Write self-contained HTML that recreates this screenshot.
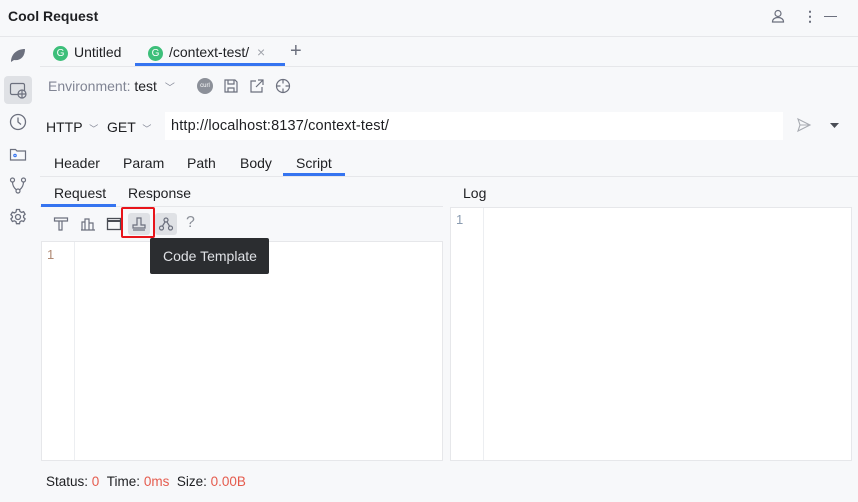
<!DOCTYPE html>
<html><head><meta charset="utf-8"><style>
body{margin:0;width:858px;height:502px;background:#f7f8fa;font-family:"Liberation Sans",sans-serif;font-size:14px;color:#1e1f22;position:relative;overflow:hidden}
.a{position:absolute;white-space:nowrap}
.line{position:absolute;background:#e6e7ea;height:1px}
svg{position:absolute}
.g{display:inline-block;width:15px;height:15px;border-radius:50%;background:#3dbf7a;color:#fff;font-size:10px;text-align:center;line-height:15px;vertical-align:1px;margin-right:6px}
</style></head><body>
<div class="a" style="left:8px;top:8px;font-weight:bold;font-size:14px">Cool Request</div>
<svg style="left:770px;top:8px" width="16" height="16" viewBox="0 0 16 16" fill="none" stroke="#6c707e" stroke-width="1.2"><circle cx="8" cy="5.5" r="3"/><path d="M2.5 14c0-3 2.5-4.5 5.5-4.5s5.5 1.5 5.5 4.5z"/></svg>
<div class="a" style="left:803px;top:8px;color:#6c707e;font-size:14px;font-weight:bold">⋮</div>
<div class="line" style="left:824px;top:16px;width:13px;background:#6c707e"></div>
<div class="line" style="left:0;top:36px;width:858px"></div>
<svg style="left:9px;top:46px" width="18" height="18" viewBox="0 0 18 18"><path d="M2 16C2 8 8 3 16 3c0 8-5 12-11 11z" fill="#6c707e"/></svg>
<div class="a" style="left:4px;top:76px;width:28px;height:28px;background:#dfe1e5;border-radius:4px"></div>
<svg style="left:9px;top:81px" width="18" height="18" viewBox="0 0 18 18" fill="none" stroke="#6c707e" stroke-width="1.2"><rect x="1.5" y="2.5" width="14" height="11" rx="1.5"/><circle cx="13" cy="13" r="4" fill="#dfe1e5"/><path d="M9 13h8M13 9v8"/></svg>
<svg style="left:9px;top:113px" width="18" height="18" viewBox="0 0 18 18" fill="none" stroke="#6c707e" stroke-width="1.3"><circle cx="9" cy="9" r="7.5"/><path d="M9 4.5V9l3 2.5"/></svg>
<svg style="left:9px;top:145px" width="18" height="18" viewBox="0 0 18 18" fill="none" stroke="#6c707e" stroke-width="1.2"><path d="M1.5 4.5h5l1.5 1.5h8.5v9h-15z"/><circle cx="6" cy="10.5" r="1.2" stroke="#3574f0"/></svg>
<svg style="left:9px;top:176px" width="18" height="18" viewBox="0 0 18 18" fill="none" stroke="#6c707e" stroke-width="1.2"><circle cx="3.5" cy="4" r="2"/><circle cx="14.5" cy="4" r="2"/><circle cx="9" cy="15" r="2"/><path d="M3.5 6c0 5 3 7 4 8M14.5 6c0 5-3 7-4 8"/></svg>
<svg style="left:9px;top:208px" width="18" height="18" viewBox="0 0 18 18" fill="none" stroke="#6c707e" stroke-width="1.3"><circle cx="9" cy="9" r="2.5"/><path d="M7.5 1.5h3l.5 2 1.6.9 2-.7 1.5 2.6-1.5 1.4v1.8l1.5 1.4-1.5 2.6-2-.7-1.6.9-.5 2h-3l-.5-2-1.6-.9-2 .7-1.5-2.6 1.5-1.4V8.2L1.9 6.8l1.5-2.6 2 .7L7 4z"/></svg>
<div class="a" style="left:53px;top:44px"><span class="g">G</span>Untitled</div>
<div class="a" style="left:148px;top:44px"><span class="g">G</span>/context-test/ <span style="color:#a0a3ab;margin-left:4px">×</span></div>
<div class="a" style="left:290px;top:40px;font-size:20px;color:#6c707e">+</div>
<div class="line" style="left:40px;top:66px;width:818px"></div>
<div class="a" style="left:135px;top:63px;width:150px;height:3px;background:#3574f0"></div>
<div class="a" style="left:48px;top:78px;color:#818594">Environment: <span style="color:#1e1f22">test</span> <span style="font-size:10px;margin-left:4px">﹀</span></div>
<div class="a" style="left:197px;top:78px;width:16px;height:16px;border-radius:50%;background:#8c9099;color:#fff;font-size:6px;line-height:16px;text-align:center">curl</div>
<svg style="left:223px;top:78px" width="16" height="16" viewBox="0 0 16 16" fill="none" stroke="#6c707e" stroke-width="1.2"><path d="M2 2h10l2 2v10H2z M5 2v4h6V2 M5 14v-4h6v4"/></svg>
<svg style="left:249px;top:78px" width="16" height="16" viewBox="0 0 16 16" fill="none" stroke="#6c707e" stroke-width="1.2"><path d="M7 3H2v11h11V9M9 2h5v5M14 2L7 9"/></svg>
<svg style="left:275px;top:78px" width="16" height="16" viewBox="0 0 16 16" fill="none" stroke="#6c707e" stroke-width="1.2"><circle cx="8" cy="8" r="6.5"/><path d="M8 1.5v4M8 10.5v4M1.5 8h4M10.5 8h4"/></svg>
<div class="a" style="left:46px;top:119px">HTTP <span style="font-size:9px;color:#818594;margin-left:3px">﹀</span></div>
<div class="a" style="left:107px;top:119px">GET <span style="font-size:9px;color:#818594;margin-left:3px">﹀</span></div>
<div class="a" style="left:165px;top:112px;width:618px;height:28px;background:#fff"></div>
<div class="a" style="left:171px;top:118px;font-size:14.5px;letter-spacing:0.15px">http://localhost:8137/context-test/</div>
<svg style="left:796px;top:117px" width="16" height="16" viewBox="0 0 16 16" fill="none" stroke="#a8abb2" stroke-width="1.1"><path d="M2 2l12 6-12 6 2-6z M4 8h10"/></svg>
<svg style="left:830px;top:123px" width="10" height="6"><path d="M0 0h9l-4.5 5z" fill="#4a4d55"/></svg>
<div class="a" style="left:54px;top:155px">Header</div>
<div class="a" style="left:123px;top:155px">Param</div>
<div class="a" style="left:187px;top:155px">Path</div>
<div class="a" style="left:240px;top:155px">Body</div>
<div class="a" style="left:296px;top:155px">Script</div>
<div class="line" style="left:40px;top:176px;width:818px"></div>
<div class="a" style="left:283px;top:173px;width:62px;height:3px;background:#3574f0"></div>
<div class="a" style="left:54px;top:185px">Request</div>
<div class="a" style="left:128px;top:185px">Response</div>
<div class="a" style="left:463px;top:185px">Log</div>
<div class="line" style="left:40px;top:206px;width:403px"></div>
<div class="a" style="left:41px;top:204px;width:75px;height:3px;background:#3574f0"></div>
<svg style="left:53px;top:216px" width="16" height="16" viewBox="0 0 16 16" fill="none" stroke="#6c707e" stroke-width="1.2"><path d="M1.5 2h13v3h-13zM6 5v9h3V5"/></svg>
<svg style="left:80px;top:216px" width="16" height="16" viewBox="0 0 16 16" fill="none" stroke="#6c707e" stroke-width="1.2"><path d="M2 14V6h3v8M5 14V3h4v11M9 14V7h4v7M1 14h14"/></svg>
<svg style="left:106px;top:216px" width="16" height="16" viewBox="0 0 16 16" fill="none" stroke="#4a4d55" stroke-width="1.3"><rect x="1.5" y="2.5" width="13" height="11"/><path d="M1.5 5h13" stroke-width="2"/></svg>
<div class="a" style="left:128px;top:213px;width:22px;height:22px;background:#dfe1e5;border-radius:3px"></div>
<div class="a" style="left:121px;top:207px;width:30px;height:27px;border:2px solid #e8141a;border-radius:2px"></div>
<svg style="left:131px;top:216px" width="16" height="16" viewBox="0 0 16 16" fill="none" stroke="#6c707e" stroke-width="1.2"><path d="M6 2h4v7h4v3H2V9h4zM2 14h12"/></svg>
<div class="a" style="left:155px;top:213px;width:22px;height:22px;background:#dfe1e5;border-radius:3px"></div>
<svg style="left:158px;top:216px" width="16" height="16" viewBox="0 0 16 16" fill="none" stroke="#6c707e" stroke-width="1.2"><circle cx="8" cy="4" r="2"/><circle cx="3.5" cy="12" r="2"/><circle cx="12.5" cy="12" r="2"/><path d="M7 6l-2.5 4M9 6l2.5 4"/></svg>
<div class="a" style="left:186px;top:214px;color:#8c9099;font-size:16px">?</div>
<div class="a" style="left:41px;top:241px;width:400px;height:218px;background:#fff;border:1px solid #e6e7ea"></div>
<div class="a" style="left:74px;top:242px;width:1px;height:218px;background:#eceef1"></div>
<div class="a" style="left:47px;top:247px;color:#b08a74;font-size:13px">1</div>
<div class="a" style="left:450px;top:207px;width:400px;height:252px;background:#fff;border:1px solid #e6e7ea"></div>
<div class="a" style="left:483px;top:208px;width:1px;height:252px;background:#eceef1"></div>
<div class="a" style="left:456px;top:212px;color:#8a9bb0;font-size:13px">1</div>
<div class="a" style="left:150px;top:238px;width:119px;height:36px;background:#2b2d30;border-radius:2px"></div>
<div class="a" style="left:163px;top:248px;color:#dfe1e5;font-size:14px">Code Template</div>
<div class="a" style="left:46px;top:474px;font-size:13.5px">Status: <span style="color:#e55b4d">0</span>&nbsp;&nbsp;Time: <span style="color:#e55b4d">0ms</span>&nbsp;&nbsp;Size: <span style="color:#e55b4d">0.00B</span></div>
</body></html>
